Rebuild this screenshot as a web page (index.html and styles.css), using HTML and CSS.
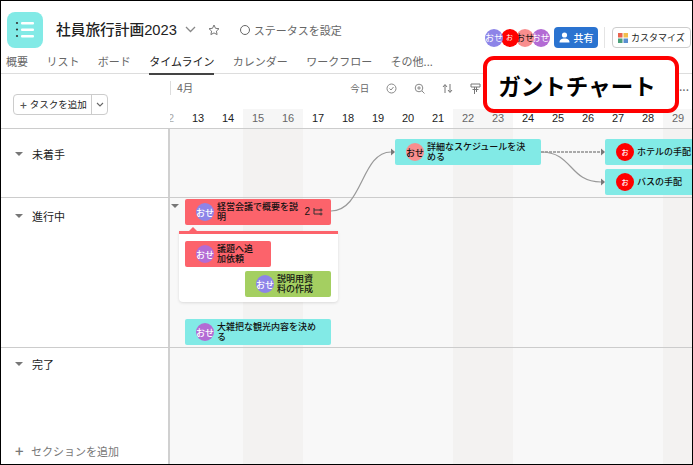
FILE: index.html
```html
<!DOCTYPE html>
<html lang="ja">
<head>
  <meta charset="utf-8"/>
  <title>社員旅行計画2023</title>
  <link rel="stylesheet" href="styles.css">
</head>
<body>
<div class="frame">

  <header class="header">
    <div class="top-row">
      <div class="logo">
        <svg width="36" height="36" viewBox="0 0 36 36"><g fill="#fff"><rect x="14" y="10" width="13" height="2.5" rx="1"/><rect x="14" y="16.500" width="13" height="2.500" rx="1"/><rect x="14" y="23" width="13" height="2.500" rx="1"/></g><g fill="#333"><circle cx="10" cy="11" r="1.100"/><circle cx="10" cy="17.500" r="1.100"/><circle cx="10" cy="24" r="1.100"/></g></svg>
      </div>
      <h1 class="title">社員旅行計画<b>2023</b></h1>
      <svg class="title-icon" width="11" height="7" viewBox="0 0 11 7"><path d="M1 1l4.500 4.500L10 1" fill="none" stroke="#888" stroke-width="1.300"/></svg>
      <svg class="star" width="12" height="12" viewBox="0 0 12 12"><path d="M6 1l1.500 3.300 3.500.4-2.600 2.400.7 3.500L6 8.900l-3.100 1.700.7-3.500L1 4.700l3.500-.4z" fill="none" stroke="#777" stroke-width="1"/></svg>
      <span class="status"><i class="status-dot"></i>ステータスを設定</span>
      <div class="actions">
        <div class="avatars">
          <span class="avatar purple">おせ</span>
          <span class="avatar red">お</span>
          <span class="avatar pink">おせ</span>
          <span class="avatar orchid">おせ</span>
        </div>
        <span class="share">
          <svg width="11" height="11" viewBox="0 0 11 11"><circle cx="5.500" cy="3" r="2.600" fill="#fff"/><path d="M0.500 10.500c0-3 2-4 5-4s5 1 5 4z" fill="#fff"/></svg>
          共有
        </span>
        <i class="divider"></i>
        <span class="customize">
          <svg width="10" height="10" viewBox="0 0 10 10"><rect width="4.500" height="4.500" fill="#e8634f"/><rect x="5.500" width="4.500" height="4.500" fill="#f1bd4c"/><rect y="5.500" width="4.500" height="4.500" fill="#4aa07b"/><rect x="5.500" y="5.500" width="4.500" height="4.500" fill="#5a8fd0"/></svg>
          カスタマイズ
        </span>
      </div>
    </div>
    <nav class="tabs">
      <span>概要</span>
      <span>リスト</span>
      <span>ボード</span>
      <span class="tab-active">タイムライン</span>
      <span>カレンダー</span>
      <span>ワークフロー</span>
      <span>その他...</span>
    </nav>
  </header>

  <div class="toolbar">
    <div class="toolbar-left">
      <span class="add-task">
        <span class="add-main"><b>+</b>タスクを追加</span>
        <span class="add-more"><svg width="8" height="5" viewBox="0 0 8 5"><path d="M1 1l3 3 3-3" fill="none" stroke="#666" stroke-width="1.100"/></svg></span>
      </span>
    </div>
    <div class="toolbar-right">
      <div class="month-row">
        <span class="month">4月</span>
        <div class="controls">
          <span>今日</span>
          <svg width="11" height="11" viewBox="0 0 11 11"><circle cx="5.500" cy="5.500" r="4.500" fill="none" stroke="#888"/><path d="M3.500 5.500l1.500 1.500 2.500-3" fill="none" stroke="#888"/></svg>
          <svg width="11" height="11" viewBox="0 0 11 11"><circle cx="5" cy="5" r="3.800" fill="none" stroke="#888"/><path d="M3.200 5h3.600M5 3.200v3.600M8 8l2.500 2.500" fill="none" stroke="#888"/></svg>
          <svg width="11" height="11" viewBox="0 0 11 11"><path d="M3 10V2M1 4l2-2.500L5 4M8 1v8M6 7l2 2.500L10 7" fill="none" stroke="#777"/></svg>
          <svg width="11" height="11" viewBox="0 0 11 11"><path d="M1 1h9v3H1zM2.500 6.500h6M4.500 4v7M6.500 4v5" fill="none" stroke="#777"/></svg>
        </div>
        <span class="more">...</span>
      </div>
      <div class="days">
        <span class="faint">12</span><span>13</span><span>14</span><span class="off">15</span><span class="off">16</span><span>17</span><span>18</span><span>19</span><span>20</span><span>21</span><span class="off">22</span><span class="off">23</span><span>24</span><span>25</span><span>26</span><span>27</span><span>28</span><span class="off">29</span>
      </div>
    </div>
  </div>

  <div class="board">
    <section class="row row-todo">
      <div class="section-name section-first"><i class="caret"></i>未着手</div>
    </section>
    <section class="row row-doing">
      <div class="section-name"><i class="caret"></i>進行中</div>
    </section>
    <section class="row row-done">
      <div class="section-name">
        <div class="section-label"><i class="caret"></i>完了</div>
        <div class="add-section"><b>+</b>セクションを追加</div>
      </div>
    </section>

    <div class="canvas">
      <svg class="links" width="522" height="240" viewBox="0 0 522 240">
        <g fill="none" stroke="#999" stroke-width="1.200">
          <path d="M161 82c32 0 30-59 60-59"/>
          <path d="M371 23h60" stroke="#aaa" stroke-width="2" stroke-dasharray="3 1"/>
          <path d="M371 23c32 0 28 30 60 30"/>
        </g>
        <g fill="#777">
          <path d="M221 19.500l4 3.500-4 3.500z"/>
          <path d="M431 19.500l4 3.500-4 3.500z"/>
          <path d="M431 49.500l4 3.500-4 3.500z"/>
        </g>
      </svg>

      <div class="bar teal bar-plan">
        <span class="avatar pink">おせ</span>
        <span class="bar-text">詳細なスケジュールを決める</span>
      </div>
      <div class="bar teal bar-hotel">
        <span class="avatar red">お</span>
        <span class="bar-text nowrap">ホテルの手配</span>
      </div>
      <div class="bar teal bar-bus">
        <span class="avatar red">お</span>
        <span class="bar-text nowrap">バスの手配</span>
      </div>

      <i class="caret caret-bar"></i>
      <div class="bar coral bar-meeting">
        <span class="avatar purple">おせ</span>
        <span class="bar-text">経営会議で概要を説明</span>
        <span class="sub-count">2
          <svg width="10" height="8" viewBox="0 0 10 8"><path d="M1 0v6h6M1 2h6" fill="none" stroke="#333"/><circle cx="8" cy="2" r="1" fill="none" stroke="#333"/><circle cx="8" cy="6" r="1" fill="none" stroke="#333"/></svg>
        </span>
      </div>
      <div class="subpanel">
        <i class="subpanel-tip"></i>
      </div>
      <div class="bar coral bar-request">
        <span class="avatar orchid">おせ</span>
        <span class="bar-text">議題へ追加依頼</span>
      </div>
      <div class="bar green bar-docs">
        <span class="avatar purple">おせ</span>
        <span class="bar-text">説明用資料の作成</span>
      </div>
      <div class="bar teal bar-sight">
        <span class="avatar orchid">おせ</span>
        <span class="bar-text">大雑把な観光内容を決める</span>
      </div>
    </div>
  </div>

  <div class="callout">ガントチャート</div>
</div>
</body>
</html>
```
FILE: styles.css
```css
* {
  box-sizing: border-box;
}
body {
  margin: 0;
  font-family: "Noto Sans CJK JP", "Liberation Sans", sans-serif;
  color: #222;
}
.frame {
  position: relative;
  width: 693px;
  height: 465px;
  border: 1px solid #000;
  display: flex;
  flex-direction: column;
  overflow: hidden;
  background: #fff;
}

/* header */
.header {
  height: 73px;
  border-bottom: 1px solid #ddd;
  flex: none;
}
.top-row {
  display: flex;
  align-items: center;
  height: 50px;
  padding: 7px 1px 0 6px;
}
.logo {
  width: 36px;
  height: 36px;
  border-radius: 8px;
  background: #82eae6;
  flex: none;
}
.title {
  margin: 0 0 0 13px;
  font-size: 14.7px;
  font-weight: 500;
  line-height: 20px;
  white-space: nowrap;
}
.title b {
  font-family: "Liberation Sans", sans-serif;
  font-weight: 500;
}
.title-icon {
  margin-left: 8px;
}
.star {
  margin-left: 12px;
}
.status {
  display: flex;
  align-items: center;
  margin-left: 20px;
  font-size: 11px;
  color: #666;
  white-space: nowrap;
}
.status-dot {
  width: 10px;
  height: 10px;
  margin-right: 4px;
  border: 1px solid #666;
  border-radius: 50%;
}
.actions {
  display: flex;
  align-items: center;
  margin-left: auto;
  padding-top: 16px;
}
.avatars {
  display: flex;
  margin-right: 7px;
}
.avatars .avatar {
  position: relative;
  margin-right: -2.5px;
}
.avatars .purple { z-index: 4; }
.avatars .red { z-index: 3; }
.avatars .pink { z-index: 2; }
.avatars .orchid { z-index: 1; }
.avatar {
  width: 18px;
  height: 18px;
  flex: none;
  display: flex;
  align-items: center;
  justify-content: center;
  border-radius: 50%;
  color: #fff;
  font-size: 9px;
  line-height: 1;
  white-space: nowrap;
  overflow: hidden;
}
.purple { background: #8d84e8; }
.orchid { background: #b36bd4; }
.pink { background: #f98e8e; color: #111; }
.avatar.red { background: #f00; font-size: 7px; }
.share {
  display: flex;
  align-items: center;
  justify-content: center;
  gap: 4px;
  width: 44px;
  height: 21px;
  border-radius: 4px;
  background: #2a73d0;
  color: #fff;
  font-size: 10px;
  font-weight: 500;
}
.divider {
  width: 1px;
  height: 21px;
  margin: 0 7px 0 6px;
  background: #e4e4e4;
}
.customize {
  display: flex;
  align-items: center;
  gap: 3px;
  width: 79px;
  height: 21px;
  padding-left: 5px;
  border: 1px solid #ccc;
  border-radius: 4px;
  font-size: 9px;
  white-space: nowrap;
}
.tabs {
  display: flex;
  gap: 18.4px;
  height: 22px;
  padding-left: 5px;
  font-size: 11px;
  line-height: 20px;
  color: #666;
}
.tabs span {
  height: 24px;
  white-space: nowrap;
}
.tabs .tab-active {
  color: #222;
  border-bottom: 2px solid #444;
}

/* toolbar above the timeline */
.toolbar {
  display: flex;
  height: 55px;
  flex: none;
  border-bottom: 1px solid #ccc;
}
.toolbar-left {
  width: 169px;
  flex: none;
  padding: 17px 0 0 12px;
}
.add-task {
  display: inline-flex;
  height: 21px;
  border: 1px solid #ccc;
  border-radius: 4px;
  font-size: 9.5px;
  line-height: 19px;
  white-space: nowrap;
}
.add-main {
  display: flex;
  width: 78px;
  padding-left: 6px;
  border-right: 1px solid #ccc;
}
.add-main b {
  margin-right: 3px;
  font-size: 12px;
  font-weight: 500;
  color: #555;
}
.add-more {
  display: flex;
  align-items: center;
  justify-content: center;
  width: 15px;
}
.toolbar-right {
  flex: 1;
  min-width: 0;
  display: flex;
  flex-direction: column;
  overflow: hidden;
}
.month-row {
  display: flex;
  align-items: center;
  height: 35px;
  padding-bottom: 7px;
  font-size: 10.5px;
  color: #666;
}
.month {
  height: 14px;
  padding-left: 6px;
  border-left: 1px solid #ddd;
  line-height: 14px;
  white-space: nowrap;
}
.controls {
  display: flex;
  align-items: center;
  gap: 17px;
  margin-left: 157px;
  font-size: 9.5px;
  white-space: nowrap;
}
.more {
  margin-left: auto;
  padding: 0 3px 6px 0;
  font-size: 12px;
}
.days {
  display: flex;
  flex: 1;
  margin-left: -17px;
  font-family: "Liberation Sans", sans-serif;
  font-size: 11px;
  line-height: 18px;
}
.days span {
  width: 30px;
  flex: none;
  text-align: center;
}
.days .off {
  background: #f6f6f6;
  color: #666;
}
.days .faint {
  color: #aaa;
}

/* timeline body */
.board {
  position: relative;
  flex: 1;
  display: flex;
  flex-direction: column;
  min-height: 0;
  background-color: #f8f8f8;
  background-image: linear-gradient(90deg, #f3f2f1 60px, transparent 60px);
  background-size: 210px 100%;
  background-position: 242px 0;
  background-repeat: repeat-x;
}
.row {
  border-bottom: 1px solid #ccc;
  flex: none;
}
.row-todo { height: 69px; }
.row-doing { height: 150px; }
.row-done {
  flex: 1;
  border-bottom: none;
  display: flex;
}
.section-name {
  display: flex;
  align-items: flex-start;
  width: 169px;
  height: 100%;
  padding: 9px 0 0 14px;
  background: #fff;
  border-right: 2px solid #d0d0d0;
  font-size: 11px;
  line-height: 18px;
}
.section-first {
  padding-top: 16px;
}
.row-done .section-name {
  flex-direction: column;
  justify-content: space-between;
  padding-top: 7px;
  padding-bottom: 4px;
}
.section-label {
  display: flex;
}
.caret {
  width: 0;
  height: 0;
  margin: 7px 9px 0 0;
  border-style: solid;
  border-width: 4px 4px 0;
  border-color: #777 transparent transparent;
  flex: none;
}
.add-section {
  display: flex;
  color: #777;
  font-size: 11px;
}
.add-section b {
  width: 16px;
  font-size: 15px;
  font-weight: 500;
  line-height: 17px;
}

/* bars sit at their dates on the timeline canvas */
.canvas {
  position: absolute;
  left: 169px;
  top: 0;
  right: 0;
  bottom: 0;
  overflow: hidden;
}
.links {
  position: absolute;
  left: 0;
  top: 0;
}
.bar {
  position: absolute;
  display: flex;
  align-items: center;
  gap: 3px;
  height: 26px;
  padding: 0 6px 0 11px;
  border-radius: 2px;
  font-size: 9px;
  font-weight: 500;
  line-height: 10px;
  color: #111;
}
.teal { background: #82eae6; }
.coral { background: #fc636b; }
.green { background: #a4cf61; }
.bar-text {
  min-width: 0;
}
.nowrap {
  white-space: nowrap;
}
.bar-plan { left: 225px; top: 10px; width: 146px; padding-right: 14px; }
.bar-hotel { left: 435px; top: 10px; width: 100px; }
.bar-bus { left: 435px; top: 40px; width: 100px; }
.bar-meeting { left: 15px; top: 70px; width: 146px; padding-right: 8px; }
.bar-request { left: 15px; top: 112px; width: 86px; padding-right: 13px; }
.bar-docs { left: 75px; top: 142px; width: 86px; padding-right: 13px; }
.bar-sight { left: 15px; top: 190px; width: 146px; padding-right: 14px; }
.caret-bar {
  position: absolute;
  left: 1px;
  top: 75px;
  margin: 0;
}
.sub-count {
  display: flex;
  align-items: center;
  gap: 3px;
  flex: none;
  margin-left: 2px;
  font-family: "Liberation Sans", sans-serif;
  font-size: 10px;
  font-weight: 400;
}
.subpanel {
  position: absolute;
  left: 9px;
  top: 102px;
  width: 159px;
  height: 71px;
  background: #fff;
  border-top: 3px solid #fc636b;
  border-radius: 0 0 4px 4px;
  box-shadow: 0 1px 3px rgba(0, 0, 0, 0.12);
}
.subpanel-tip {
  position: absolute;
  left: 10px;
  top: -7px;
  border-style: solid;
  border-width: 0 4px 4px;
  border-color: transparent transparent #fc636b;
}

/* annotation over the screenshot */
.callout {
  position: absolute;
  left: 482px;
  top: 55px;
  width: 196px;
  height: 57px;
  display: flex;
  align-items: center;
  justify-content: center;
  padding-right: 8px;
  background: #fff;
  border: 4px solid #f00;
  border-radius: 11px;
  color: #000;
  font-size: 22.5px;
  font-weight: 700;
  white-space: nowrap;
}
```
